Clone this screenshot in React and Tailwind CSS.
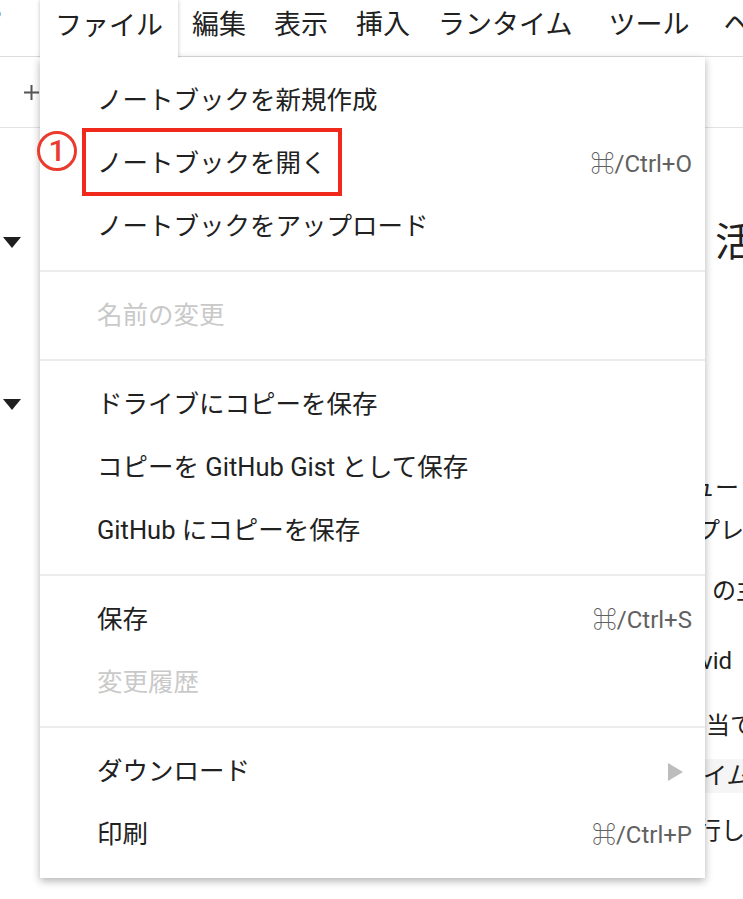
import React from "react";

const FONT = { fontFamily: "Roboto, 'Noto Sans CJK JP', 'DejaVu Sans', sans-serif" };

const menuTabs = ["編集", "表示", "挿入", "ランタイム", "ツール", "ヘルプ"];

// groups of file-menu items
const groups = [
  [
    { label: "ノートブックを新規作成" },
    { label: "ノートブックを開く", shortcut: "⌘/Ctrl+O" },
    { label: "ノートブックをアップロード" },
  ],
  [{ label: "名前の変更", disabled: true }],
  [
    { label: "ドライブにコピーを保存" },
    { label: "コピーを GitHub Gist として保存" },
    { label: "GitHub にコピーを保存" },
  ],
  [
    { label: "保存", shortcut: "⌘/Ctrl+S" },
    { label: "変更履歴", disabled: true },
  ],
  [
    { label: "ダウンロード", submenu: true },
    { label: "印刷", shortcut: "⌘/Ctrl+P" },
  ],
];

const Caret = () => (
  <svg width="18" height="11" viewBox="0 0 18 11">
    <polygon points="0,0 18,0 9,11" fill="#1f1f1f" />
  </svg>
);

const MenuItem = ({ item }) => (
  <div className="h-[63px] flex items-center justify-between pl-[57px] pr-[13px]">
    <span className={`text-[25.5px] whitespace-nowrap ${item.disabled ? "text-[#c9c9c9]" : "text-[#212121]"}`}>
      {item.label}
    </span>
    {item.shortcut && <span className="text-[24px] text-[#616161]">{item.shortcut}</span>}
    {item.submenu && (
      <svg width="15" height="18" viewBox="0 0 15 18" className="mr-[9px]">
        <polygon points="0,0 15,9 0,18" fill="#bdbdbd" />
      </svg>
    )}
  </div>
);

export default function App() {
  return (
    <div className="relative w-[743px] h-[899px] overflow-hidden bg-white" style={FONT}>
      {/* menubar */}
      <header className="h-[57px] flex border-b border-[#dcdcdc] text-[27px] text-[#212121] whitespace-nowrap">
        <div className="w-[40px] shrink-0 overflow-hidden">
          <span className="block -ml-[9px] mt-[2px] text-[22px] text-[#757575]">?</span>
        </div>
        <div className="relative z-20 shrink-0 h-[58px] px-[15px] pb-[6px] flex items-center bg-white shadow-[0_0_4px_rgba(0,0,0,0.25)] [clip-path:inset(-6px_-6px_0_-6px)]">
          ファイル
        </div>
        {menuTabs.map((t) => (
          <div key={t} className="shrink-0 h-full px-[14px] pb-[6px] flex items-center first:pl-[16px] last:pl-[20px] [&:nth-child(7)]:pl-[22px]">
            {t}
          </div>
        ))}
      </header>

      {/* toolbar */}
      <div className="h-[71px] border-b border-[#e3e3e3] flex items-center pl-[24px]">
        <svg width="15" height="15" viewBox="0 0 15 15">
          <path d="M7.5 0v15M0 7.5h15" stroke="#555" strokeWidth="2" />
        </svg>
      </div>

      {/* notebook content behind the menu */}
      <div className="flex">
        <div className="w-[40px] shrink-0 pl-[3px]">
          <div className="mt-[109px]"><Caret /></div>
          <div className="mt-[151px]"><Caret /></div>
        </div>
        <div className="ml-[650px] min-w-0 flex-1 flex flex-col text-[24px] text-[#212121] whitespace-nowrap">
          <div className="mt-[94px] h-[42px] leading-[42px] text-[40px] pl-[25px]">活用</div>
          <div className="mt-[207px] h-[34px] leading-[34px] pl-[1px]">ュー</div>
          <div className="mt-[9px] h-[34px] leading-[34px] pl-[6px]">プレイ</div>
          <div className="mt-[26px] h-[34px] leading-[34px] pl-[22px]">の主</div>
          <div className="mt-[36px] h-[34px] leading-[34px] pl-[11px]">vid</div>
          <div className="mt-[31px] h-[34px] leading-[34px] pl-[16px]">当て</div>
          <div className="mt-[16px] h-[34px] leading-[34px] pl-[13px] bg-[#f5f5f5]">イム</div>
          <div className="mt-[21px] h-[34px] leading-[34px] pl-[7px]">行し</div>
        </div>
      </div>

      {/* file dropdown menu */}
      <div className="absolute z-10 left-[40px] top-[57px] w-[665px] bg-white shadow-[0_3px_8px_rgba(0,0,0,0.3)]">
        {groups.map((g, i) => (
          <div key={i}>
            {i > 0 && <div className="h-[2px] bg-[#ececec]" />}
            <div className="py-[12px]">
              {g.map((item) => (
                <MenuItem key={item.label} item={item} />
              ))}
            </div>
          </div>
        ))}
      </div>

      {/* annotation */}
      <div className="absolute z-30 left-[82px] top-[128px] w-[260px] h-[68px] border-[4px] border-[#f0291c]" />
      <div className="absolute z-30 left-[37px] top-[131px] w-[40px] h-[40px] rounded-full border-[3px] border-[#ea3b2e] flex items-center justify-center text-[#ea3b2e] text-[30px] font-medium leading-none">
        1
      </div>
    </div>
  );
}
